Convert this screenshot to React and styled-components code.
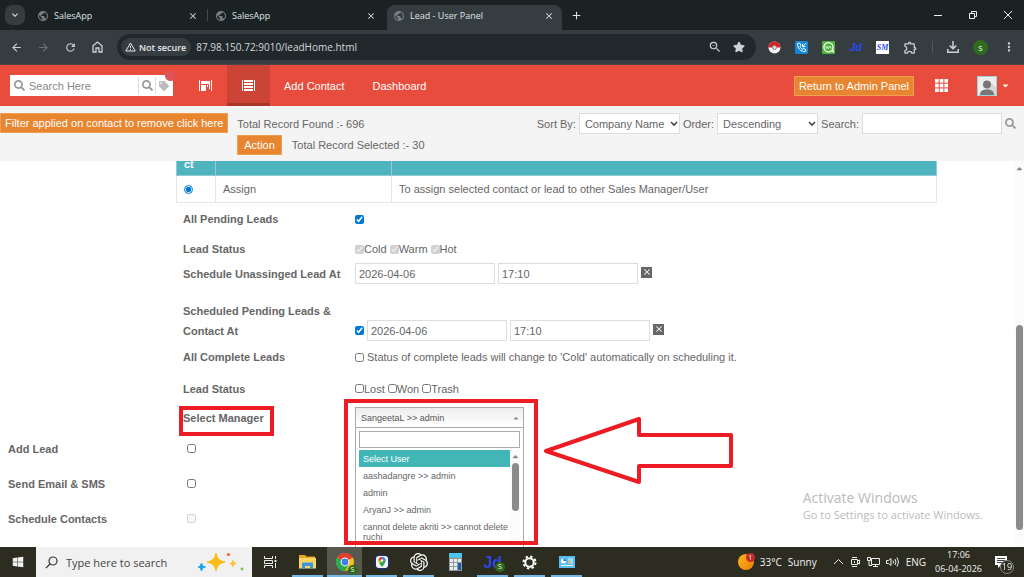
import React, { useState } from "react";
import styled, { createGlobalStyle, css } from "styled-components";
import { FaSearch, FaTag, FaStar, FaCaretDown, FaCaretUp, FaWindows } from "react-icons/fa";
import {
  MdPublic,
  MdClose,
  MdAdd,
  MdArrowBack,
  MdArrowForward,
  MdRefresh,
  MdKeyboardArrowDown,
  MdMoreVert,
  MdOutlineExtension,
  MdZoomOut,
} from "react-icons/md";
import { SiOpenai } from "react-icons/si";

const GlobalStyle = createGlobalStyle`
  * {
    box-sizing: border-box;
  }

  body {
    margin: 0;
    background: #fff;
    color: #666;
    font-family: "Liberation Sans", Arial, sans-serif;
    font-size: 11px;
    overflow: hidden;
  }

  button, input, select {
    font: inherit;
    color: inherit;
    margin: 0;
  }

  button {
    border: 0;
    padding: 0;
    background: none;
  }

  svg {
    display: block;
    flex: none;
  }
`;

const Screen = styled.div`
  display: flex;
  flex-direction: column;
  height: 100vh;
`;

/* ---------- browser ---------- */

const TabStrip = styled.div`
  display: flex;
  align-items: flex-end;
  gap: 3px;
  height: 30px;
  padding-left: 5px;
  background: #1a2224;
  color: #dfe3e4;
  font-family: "Open Sans", "Noto Sans", sans-serif;
  font-size: 9px;
`;

const TabMenu = styled.button`
  display: grid;
  place-items: center;
  width: 20px;
  height: 20px;
  margin: 0 3px 5px 0;
  border-radius: 7px;
  background: #353d41;
`;

const Tab = styled.div`
  position: relative;
  display: flex;
  align-items: center;
  gap: 5px;
  flex: 0 1 175px;
  height: 25px;
  padding: 0 8px 4px 6px;
  border-radius: 8px 8px 0 0;
  background: ${(props) => (props.$active ? "#353d41" : "transparent")};

  > svg {
    color: #777e81;
  }

  span {
    flex: 1;
  }

  ${(props) =>
    props.$divider &&
    css`
      &::after {
        content: "";
        position: absolute;
        right: -2px;
        top: 4px;
        height: 12px;
        border-right: 1px solid #414a4d;
      }
    `}
`;

const NewTab = styled.button`
  margin: 0 0 8px 5px;
`;

const WindowButtons = styled.div`
  display: flex;
  align-items: center;
  gap: 25px;
  height: 30px;
  margin-left: auto;
  padding-right: 11px;
`;

const AddressBar = styled.div`
  display: flex;
  align-items: center;
  gap: 12px;
  height: 35px;
  padding: 0 8px 0 9px;
  background: #353d41;
  color: #ccd2d4;
  border-bottom: 1px solid #4a4846;
  font-family: "Open Sans", "Noto Sans", sans-serif;
`;

const NavButton = styled.button`
  display: grid;
  place-items: center;
  width: 15px;
  height: 20px;
  color: ${(props) => (props.$dim ? "#6b7376" : "#ccd2d4")};
`;

const UrlBox = styled.div`
  display: flex;
  align-items: center;
  gap: 5px;
  flex: 1;
  height: 26px;
  padding: 0 11px 0 4px;
  border-radius: 13px;
  background: #20282b;
`;

const NotSecure = styled.span`
  display: flex;
  align-items: center;
  gap: 3px;
  height: 18px;
  padding: 0 5px 0 4px;
  border-radius: 9px;
  background: #353d41;
  color: #e4e8e9;
  font-size: 9px;
  font-weight: 600;
`;

const Url = styled.span`
  flex: 1;
  font-size: 10px;
  color: #d3d8da;
`;

const UrlIcons = styled.div`
  display: flex;
  align-items: center;
  gap: 11px;
`;

const Extensions = styled.div`
  display: flex;
  align-items: center;
  gap: 14px;
`;

const Separator = styled.span`
  width: 1px;
  height: 12px;
  background: #50585b;
`;

const Profile = styled.button`
  width: 15px;
  height: 15px;
  border-radius: 50%;
  background: #2f6a1d;
  color: #fff;
  font-size: 8px;
`;

/* ---------- application header ---------- */

const Header = styled.header`
  display: flex;
  align-items: center;
  height: 41px;
  padding: 0 14px 0 10px;
  background: #e84c3d;
  color: #fff;
`;

const SearchGroup = styled.form`
  position: relative;
  display: flex;
  align-items: center;
  width: 163px;
  height: 21px;
  padding: 0 1px 0 4px;
  background: #fff;
  color: #999;

  input {
    flex: 1;
    min-width: 0;
    padding: 0 4px;
    border: 0;
    outline: 0;
  }

  input::placeholder {
    color: #888;
  }

  button {
    display: grid;
    place-items: center;
    width: 17px;
    height: 17px;
    border-left: 1px solid #ddd;
    color: #999;
  }
`;

const Dot = styled.span`
  position: absolute;
  top: -5px;
  right: -3px;
  width: 11px;
  height: 11px;
  border-radius: 50%;
  background: #df5457;
`;

const ViewTab = styled.button`
  display: grid;
  place-items: center;
  width: 43px;
  height: 41px;
  margin-left: ${(props) => (props.$active ? "0" : "11px")};
  border-bottom: 3px solid ${(props) => (props.$active ? "#aa372c" : "transparent")};
  background: ${(props) => (props.$active ? "#cc4436" : "transparent")};
  padding-top: 3px;
  color: #fff;
`;

const HeaderLink = styled.a`
  padding: 0 14px;
  color: #fff;
  text-decoration: none;
`;

const OrangeButton = styled.button`
  height: 20px;
  padding: 0 ${(props) => (props.$tight ? "4px" : "6px")};
  border: 1px solid #f0a050;
  background: #e78531;
  color: #fff;
  white-space: nowrap;
`;

const HeaderRight = styled.div`
  display: flex;
  align-items: center;
  margin-left: auto;
  gap: 21px;
`;

const UserMenu = styled.button`
  display: flex;
  align-items: center;
  gap: 4px;
  margin-left: 8px;
  color: #fff;
`;

/* ---------- filter bar ---------- */

const FilterBar = styled.div`
  display: flex;
  align-items: flex-start;
  height: 55px;
  padding: 7px 8px 0 0;
  background: #f4f4f4;
`;

const Totals = styled.div`
  display: flex;
  flex-direction: column;
  margin-left: 9px;
`;

const TotalLine = styled.div`
  display: flex;
  align-items: center;
  gap: 10px;
  height: 21px;
`;

const SortGroup = styled.div`
  display: flex;
  align-items: center;
  gap: 3px;
  margin-left: auto;
`;

const SelectWrap = styled.span`
  position: relative;
  display: flex;

  select {
    appearance: none;
    width: 101px;
    height: 21px;
    padding: 0 5px;
    border: 1px solid #ddd;
    border-radius: 0;
    background: #fff;
  }

  svg {
    position: absolute;
    top: 8px;
    right: 2px;
    pointer-events: none;
  }
`;

const TextBox = styled.input`
  width: 140px;
  height: 21px;
  padding: 0 3px;
  border: 1px solid #ddd;
  background: #fff;
  outline: 0;
`;

/* ---------- page body ---------- */

const Body = styled.div`
  display: flex;
  flex: 1;
  min-height: 0;
  overflow: hidden;
`;

const Main = styled.main`
  flex: 1;
  min-width: 0;
`;

const Rail = styled.div`
  display: flex;
  flex-direction: column;
  align-items: center;
  width: 10px;
  background: #fbfbfb;
  color: #888;
`;

const RailThumb = styled.div`
  width: 7px;
  height: ${(props) => props.$length}px;
  margin-top: ${(props) => props.$offset}px;
  border-radius: 4px;
  background: #8b8b8b;
`;

const ActionTable = styled.table`
  width: 75%;
  margin: -28px 0 0 176px;
  border-collapse: collapse;
  text-align: left;

  th {
    height: 42px;
    padding: 0 7px;
    border: 1px solid #8ecfd6;
    background: #4fb4be;
    color: #fff;
    line-height: 16px;
  }

  th:first-child {
    padding: 2px 7px 0;
  }

  td {
    height: 27px;
    padding: 0 7px;
    border: 1px solid #e8e8e8;
  }

  input {
    display: block;
    width: 9px;
    height: 9px;
    accent-color: #0078d7;
  }
`;

const Form = styled.div`
  padding-left: 183px;
`;

const Row = styled.div`
  position: relative;
  display: grid;
  grid-template-columns: 172px 1fr;
  align-items: ${(props) => props.$align || "center"};
  min-height: ${(props) => props.$height}px;
  margin-bottom: ${(props) => props.$gap || 0}px;
`;

const Label = styled.label`
  max-width: 158px;
  font-weight: bold;
  line-height: 20px;
`;

const Field = styled.div`
  display: flex;
  align-items: center;
  gap: 3px;
`;

const Check = styled.input.attrs({ type: "checkbox" })`
  width: 9px;
  height: 9px;
  accent-color: #0078d7;
`;

const CheckLabel = styled.label`
  display: flex;
  align-items: center;
`;

const ClearButton = styled.button`
  display: grid;
  place-items: center;
  width: 11px;
  height: 11px;
  margin-bottom: 3px;
  background: #666;
  color: #fff;
`;

const SideRow = styled.div`
  display: grid;
  grid-template-columns: 179px 1fr;
  align-items: center;
  height: 35px;
  padding-left: 8px;
`;

/* ---------- manager picker ---------- */

const Picker = styled.div`
  position: relative;
  width: 169px;
  color: #555;
  font-size: 9px;
`;

const PickerButton = styled.button`
  display: flex;
  align-items: center;
  justify-content: space-between;
  width: 100%;
  height: 21px;
  padding: 0 3px 0 5px;
  border: 1px solid #aaa;
  background: linear-gradient(#eee, #fff);
`;

const Drop = styled.div`
  position: absolute;
  z-index: 1;
  top: 21px;
  left: 0;
  right: 0;
  height: 125px;
  padding: 3px;
  border: 1px solid #aaa;
  border-top: 0;
  background: #fff;

  input {
    display: block;
    width: 100%;
    height: 17px;
    padding: 0 3px;
    border: 1px solid #aaa;
    outline: 0;
  }
`;

const DropBody = styled.div`
  display: flex;
  height: 105px;
  margin-top: 2px;
  overflow: hidden;
`;

const Options = styled.ul`
  flex: 1;
  margin: 0;
  padding: 0;
  list-style: none;
`;

const Option = styled.li`
  padding: 4px 0 3px 4px;
  line-height: 10px;
  background: ${(props) => (props.$active ? "#42b6b6" : "transparent")};
  color: ${(props) => (props.$active ? "#fff" : "#666")};
`;

/* ---------- red markers and watermark ---------- */

const Marker = styled.div`
  position: absolute;
  z-index: 2;
  border: 4px solid #ed1c24;
  pointer-events: none;
`;

const ManagerMarker = styled(Marker)`
  top: 2px;
  left: -4px;
  width: 95px;
  height: 30px;
`;

const PickerMarker = styled(Marker)`
  top: -8px;
  left: -11px;
  width: 194px;
  height: 146px;
`;

const Arrow = styled.svg`
  position: absolute;
  z-index: 2;
  top: 10px;
  left: 187px;
`;

const Watermark = styled.div`
  position: absolute;
  right: 41px;
  bottom: 54px;
  color: #bbb;
  font-family: "Open Sans", "Noto Sans", sans-serif;
  font-size: 11px;
  line-height: 16px;

  strong {
    display: block;
    font-size: 14px;
    font-weight: 400;
    line-height: 18px;
  }
`;

/* ---------- taskbar ---------- */

const Taskbar = styled.footer`
  display: flex;
  position: relative;
  z-index: 3;
  height: 30px;
  background: #2c2c21;
  color: #f2f2f2;
  font-family: "Open Sans", "Noto Sans", sans-serif;
  font-size: 10px;
`;

const TaskButton = styled.button`
  display: grid;
  place-items: center;
  width: ${(props) => props.$width || 37}px;
  height: 30px;
  background: ${(props) => (props.$active ? "#57584f" : "transparent")};
  box-shadow: ${(props) => (props.$open ? "inset 0 -2px #76b9e6" : "none")};
  background-clip: padding-box;
  border: 0 solid transparent;
  border-width: ${(props) => (props.$active ? "0 1px" : "0 3px")};
`;

const TaskSearch = styled.label`
  display: flex;
  align-items: center;
  gap: 8px;
  width: 216px;
  padding: 0 8px 0 9px;
  background: #f1f1f1;
  color: #444;

  input {
    flex: 1;
    min-width: 0;
    padding: 0;
    border: 0;
    background: none;
    font-size: 11px;
    outline: 0;
  }

  input::placeholder {
    color: #444;
  }
`;

const Tray = styled.div`
  display: flex;
  align-items: center;
  gap: 6px;
  margin-left: auto;
  padding-right: 10px;
`;

const Clock = styled.div`
  padding-left: 3px;
  font-size: 9px;
  line-height: 14px;
  text-align: center;
`;

const Weather = styled.div`
  display: flex;
  align-items: center;
  gap: 6px;
  margin-right: 10px;
`;

/* ---------- icons ---------- */

const HomeIcon = () => (
  <svg width="11" height="12" viewBox="0 0 11 12" fill="none" stroke="currentColor" strokeWidth="1.3">
    <path d="M1 4.8 5.5 1 10 4.8V11H7V7H4v4H1z" />
  </svg>
);

const WarningIcon = () => (
  <svg width="11" height="10" viewBox="0 0 11 10" fill="none" stroke="currentColor">
    <path d="M5.5 1 10.2 9H.8z" />
    <path d="M5.5 3.8v2.4M5.5 7v1" />
  </svg>
);

const BallIcon = () => (
  <svg width="13" height="13" viewBox="0 0 13 13">
    <circle cx="6.5" cy="6.5" r="6" fill="#f4f4f4" />
    <path d="M.5 6.5a6 6 0 0 1 12 0z" fill="#dc1f26" />
    <circle cx="6.5" cy="6.5" r="2" fill="#ddd" stroke="#888" />
  </svg>
);

const PhoneIcon = () => (
  <svg width="13" height="13" viewBox="0 0 13 13">
    <rect width="13" height="13" rx="1" fill="#1686d9" />
    <path
      d="M2.6 2.4c-.6 4.500 3.200 8.400 7.600 8.200l.8-1.900-2-1.300-1.200.9C6.400 7.700 5.400 6.600 5 5.200l.9-1L4.600 2z"
      fill="none"
      stroke="#fff"
    />
    <path d="M11.200 2 8 5.200M7.500 2.800v2.900h2.900" stroke="#fff" fill="none" />
  </svg>
);

const ChatIcon = () => (
  <svg width="13" height="13" viewBox="0 0 13 13">
    <rect width="13" height="13" rx="1" fill="#4db33d" />
    <circle cx="6.5" cy="6.3" r="4.600" fill="none" stroke="#fff" strokeWidth="1.300" />
    <path d="M9 9.500h3V12z" fill="#fff" />
    <path d="m3.800 5 .9 2.600.9-2.200.8 2.200L8 5l1.200 2.600" fill="none" stroke="#fff" strokeWidth=".7" />
  </svg>
);

const LogoText = styled.span`
  width: ${(props) => (props.$boxed ? "13px" : "auto")};
  background: ${(props) => (props.$boxed ? "#fff" : "transparent")};
  color: #2c46f2;
  font-family: ${(props) => (props.$boxed ? '"Liberation Serif", serif' : '"Liberation Sans", sans-serif')};
  font-size: ${(props) => props.$size}px;
  font-style: ${(props) => (props.$upright ? "normal" : "italic")};
  font-weight: bold;
  line-height: 13px;
  text-align: center;
`;

const DownloadIcon = () => (
  <svg width="12" height="12" viewBox="0 0 12 12" fill="none" stroke="currentColor" strokeWidth="1.500">
    <path d="M6 0v7.500M2.800 4.600 6 7.800l3.200-3.200M.8 8v3.200h10.400V8" />
  </svg>
);

const GridIcon = () => (
  <svg width="13" height="13" viewBox="0 0 13 13" fill="#fff">
    {[0, 4.7, 9.4].map((y) =>
      [0, 4.7, 9.4].map((x) => <rect key={`${x}-${y}`} x={x} y={y} width="3.7" height="3.7" />)
    )}
  </svg>
);

const AvatarIcon = () => (
  <svg width="20" height="20" viewBox="0 0 20 20">
    <rect x=".5" y=".5" width="19" height="19" fill="#eee" stroke="#9fd3dc" />
    <path d="m12 5 7 6v8H8z" fill="#d8d8d8" />
    <circle cx="10" cy="8.5" r="4" fill="#777" />
    <path d="M3 19c0-4 2.500-5.500 7-5.500s7 1.500 7 5.500z" fill="#777" />
  </svg>
);

const BoardIcon = () => (
  <svg width="13" height="13" viewBox="0 0 13 13" fill="#fff">
    <path d="M0 1h1v11H0zM12 1h1v11h-1zM2 2h9v3H2zM2 6h5v6H2zM8 6h1v2H8zM10 5h1v5h-1z" />
  </svg>
);

const ListIcon = () => (
  <svg width="13" height="13" viewBox="0 0 13 13" fill="#fff">
    <path d="M0 1h1v11H0zM12 1h1v11h-1zM2 1h9v2H2zM2 4h9v2H2zM2 7h9v2H2zM2 10h9v2H2z" />
  </svg>
);

const SparkleIcon = () => (
  <svg width="46" height="20" viewBox="0 0 46 20">
    <path d="M18 1c1.500 6 3 7.500 9 9-6 1.500-7.500 3-9 9-1.500-6-3-7.500-9-9 6-1.500 7.500-3 9-9z" fill="#fbbc17" stroke="#fbbc17" />
    <path d="M35 7c.8 3 1.400 3.700 4.500 4.500-3 .8-3.700 1.400-4.500 4.500-.8-3-1.500-3.700-4.500-4.500 3-.8 3.700-1.500 4.500-4.500z" fill="#fbc33a" />
    <path d="M3.500 11l1.200 3 2.800 1-2.800 1-1.200 3-1.200-3-2.300-1 2.300-1z" fill="#1fa5ea" stroke="#1fa5ea" />
    <circle cx="30.500" cy="2.500" r="1.600" fill="#f0613a" />
    <circle cx="44" cy="17" r="1.400" fill="#7ac143" />
  </svg>
);

const TaskViewIcon = () => (
  <svg width="13" height="12" viewBox="0 0 13 12" fill="none" stroke="#eee">
    <path d="M.5 0v2.500h8V0M.5 12V9.500h8V12M.5 4.500h8v3h-8zM11.500 0v3M11.500 7v5" />
    <path d="M10.500 4h2v2h-2z" fill="#eee" stroke="none" />
  </svg>
);

const FolderIcon = () => (
  <svg width="17" height="14" viewBox="0 0 17 14">
    <path d="M0 0h6l1.500 1.500H16V13H0z" fill="#e9a820" />
    <path d="M0 3h17v10.500H0z" fill="#fcd462" />
    <path d="M3 7.500h11V14h-3v-3H6v3H3z" fill="#3a94de" />
  </svg>
);

const ChromeIcon = () => (
  <svg width="20" height="20" viewBox="0 0 20 20">
    <circle cx="10" cy="10" r="9" fill="#fbc116" />
    <path d="M10 10 2.200 5.500a9 9 0 0 1 15.600 0z" fill="#e33b2e" />
    <path d="M10 10 2.200 5.500A9 9 0 0 0 10 19l4-7z" fill="#2da94f" />
    <circle cx="10" cy="10" r="4.400" fill="#fff" />
    <circle cx="10" cy="10" r="3.400" fill="#3f7ee8" />
  </svg>
);

const MapsIcon = () => (
  <svg width="16" height="16" viewBox="0 0 16 16">
    <circle cx="8" cy="8" r="8" fill="#262f6e" />
    <rect x="2" y="2" width="12" height="12" rx="3" fill="#f3f5f8" />
    <path d="M8 13C5 9.500 4.500 8 4.500 6.500a3.500 3.500 0 0 1 7 0C11.500 8 11 9.500 8 13z" fill="#35a853" />
    <path d="M4.500 6.500A3.500 3.500 0 0 1 8 3v3.500z" fill="#ea4335" />
    <path d="M8 3a3.500 3.500 0 0 1 3.500 3.500H8z" fill="#4285f4" />
    <path d="M4.500 6.500H8L5.500 9.500z" fill="#fbbc04" />
    <circle cx="8" cy="6.500" r="1.200" fill="#fff" />
  </svg>
);

const CalculatorIcon = () => (
  <svg width="13" height="18" viewBox="0 0 13 18">
    <rect width="13" height="18" fill="#8f9aa0" />
    <rect width="13" height="4.500" fill="#4ac6f2" />
    <g fill="#e8eef1">
      {[6, 10, 14].map((y) =>
        [1, 5, 9].map((x) => <rect key={`${x}-${y}`} x={x} y={y} width="3" height="3" />)
      )}
    </g>
    <rect x="9" y="10" width="3" height="7" fill="#1b5fae" />
  </svg>
);

const GearIcon = () => (
  <svg width="15" height="15" viewBox="0 0 15 15" fill="none" stroke="#fff">
    <circle cx="7.5" cy="7.5" r="4.200" strokeWidth="2" />
    <circle cx="7.5" cy="7.5" r="6" strokeWidth="2" strokeDasharray="2.350 2.362" />
  </svg>
);

const CardIcon = () => (
  <svg width="16" height="12" viewBox="0 0 16 12">
    <rect width="16" height="12" fill="#55bdf0" />
    <circle cx="4.500" cy="5" r="2.500" fill="#fff" />
    <path d="M4.500 5V2.500A2.500 2.500 0 0 1 7 5z" fill="#1c6fb4" />
    <path d="M9 3h5M9 5h5M9 7h5M2 9.500h12" stroke="#e9f7ff" />
    <path d="M9 5h2M9 7h3" stroke="#e8a531" />
  </svg>
);

const ThinSearchIcon = () => (
  <svg width="13" height="13" viewBox="0 0 13 13" fill="none" stroke="#333" strokeWidth="1.200">
    <circle cx="8" cy="5" r="4" />
    <path d="M5 8 .8 12.200" />
  </svg>
);

const ChevronIcon = () => (
  <svg width="8" height="6" viewBox="0 0 8 6" fill="none" stroke="#444" strokeWidth="1.600">
    <path d="m1 1 3 3 3-3" />
  </svg>
);

const BadgeWrap = styled.span`
  position: relative;
  display: grid;
  place-items: center;
  margin: ${(props) => (props.$spaced ? "0 7px" : "0")};
`;

const SmallBadge = styled.span`
  position: absolute;
  right: -3px;
  bottom: -3px;
  width: 10px;
  height: 10px;
  border-radius: 50%;
  background: #2f6a1d;
  color: #fff;
  font-size: 7px;
  line-height: 10px;
  text-align: center;
`;

const SunIcon = styled.span`
  position: relative;
  width: 16px;
  height: 16px;
  border-radius: 50%;
  background: linear-gradient(120deg, #fdb714, #ec7a12);
`;

const SunBadge = styled.span`
  position: absolute;
  top: -1px;
  right: -1px;
  width: 9px;
  height: 9px;
  border-radius: 50%;
  background: #c42b2b;
  font-size: 7px;
  line-height: 9px;
  text-align: center;
`;

const NoticeBadge = styled.span`
  position: absolute;
  right: -7px;
  bottom: -6px;
  width: 14px;
  height: 14px;
  border: 1px solid #888;
  border-radius: 50%;
  background: #2c2c21;
  font-size: 9px;
  line-height: 12px;
  text-align: center;
`;

const tabs = [
  { title: "SalesApp", divider: true },
  { title: "SalesApp" },
  { title: "Lead - User Panel", active: true },
];

const users = [
  "Select User",
  "aashadangre >> admin",
  "admin",
  "AryanJ >> admin",
  "cannot delete akriti >> cannot delete ruchi",
];

const sideRows = [
  { id: "addLead", label: "Add Lead" },
  { id: "sendEmail", label: "Send Email & SMS" },
  { id: "scheduleContacts", label: "Schedule Contacts", disabled: true },
];

const Browser = () => (
  <>
    <TabStrip>
      <TabMenu aria-label="Search tabs">
        <MdKeyboardArrowDown size={12} />
      </TabMenu>
      {tabs.map((tab, index) => (
        <Tab key={index} $active={tab.active} $divider={tab.divider}>
          <MdPublic size={12} />
          <span>{tab.title}</span>
          <button aria-label="Close tab">
            <MdClose size={10} />
          </button>
        </Tab>
      ))}
      <NewTab aria-label="New tab">
        <MdAdd size={13} />
      </NewTab>
      <WindowButtons>
        <button aria-label="Minimize">
          <svg width="10" height="10" stroke="#eee">
            <path d="M1 5.500h8" />
          </svg>
        </button>
        <button aria-label="Restore">
          <svg width="10" height="10" fill="none" stroke="#eee">
            <path d="M1.500 3.500h5v5h-5zM3.500 3V1.500h5v5H7" />
          </svg>
        </button>
        <button aria-label="Close">
          <svg width="10" height="10" stroke="#eee">
            <path d="m1 1 8 8M9 1 1 9" />
          </svg>
        </button>
      </WindowButtons>
    </TabStrip>

    <AddressBar>
      <NavButton aria-label="Back"><MdArrowBack size={13} /></NavButton>
      <NavButton aria-label="Forward" $dim><MdArrowForward size={13} /></NavButton>
      <NavButton aria-label="Reload"><MdRefresh size={13} /></NavButton>
      <NavButton aria-label="Home"><HomeIcon /></NavButton>
      <UrlBox>
        <NotSecure>
          <WarningIcon />
          Not secure
        </NotSecure>
        <Url>87.98.150.72:9010/leadHome.html</Url>
        <UrlIcons>
          <MdZoomOut size={14} />
          <FaStar size={12} />
        </UrlIcons>
      </UrlBox>
      <Extensions>
        <BallIcon />
        <PhoneIcon />
        <ChatIcon />
        <LogoText $size={11}>Jd</LogoText>
        <LogoText $size={8} $boxed>SM</LogoText>
        <MdOutlineExtension size={15} />
        <Separator />
        <DownloadIcon />
        <Profile>S</Profile>
        <MdMoreVert size={14} />
      </Extensions>
    </AddressBar>
  </>
);

const AppHeader = () => (
  <Header>
    <SearchGroup>
      <FaSearch size={11} />
      <input type="text" placeholder="Search Here" aria-label="Search Here" />
      <button type="button" aria-label="Search"><FaSearch size={11} /></button>
      <button type="button" aria-label="Tags"><FaTag size={10} color="#bbb" /></button>
      <Dot />
    </SearchGroup>
    <ViewTab aria-label="Board view"><BoardIcon /></ViewTab>
    <ViewTab aria-label="List view" $active><ListIcon /></ViewTab>
    <HeaderLink href="#add">Add Contact</HeaderLink>
    <HeaderLink href="#dashboard">Dashboard</HeaderLink>
    <HeaderRight>
      <OrangeButton $tight>Return to Admin Panel</OrangeButton>
      <button aria-label="Apps"><GridIcon /></button>
      <UserMenu aria-label="User menu">
        <AvatarIcon />
        <FaCaretDown size={9} />
      </UserMenu>
    </HeaderRight>
  </Header>
);

const SelectBox = ({ id, value }) => (
  <SelectWrap>
    <select id={id}>
      <option>{value}</option>
    </select>
    <ChevronIcon />
  </SelectWrap>
);

const Filters = () => (
  <FilterBar>
    <OrangeButton $tight>Filter applied on contact to remove click here</OrangeButton>
    <Totals>
      <TotalLine>Total Record Found :- 696</TotalLine>
      <TotalLine>
        <OrangeButton>Action</OrangeButton>
        Total Record Selected :- 30
      </TotalLine>
    </Totals>
    <SortGroup>
      <label htmlFor="sortBy">Sort By:</label>
      <SelectBox id="sortBy" value="Company Name" />
      <label htmlFor="order">Order:</label>
      <SelectBox id="order" value="Descending" />
      <label htmlFor="search">Search:</label>
      <TextBox id="search" />
      <FaSearch size={11} color="#999" />
    </SortGroup>
  </FilterBar>
);

const DateFields = ({ name, children }) => (
  <Field>
    {children}
    <TextBox aria-label={`${name} date`} defaultValue="2026-04-06" />
    <TextBox aria-label={`${name} time`} defaultValue="17:10" />
    <ClearButton aria-label={`Clear ${name}`}>
      <MdClose size={10} />
    </ClearButton>
  </Field>
);

const StatusChecks = ({ names, ...rest }) => (
  <Field>
    {names.map((name) => (
      <CheckLabel key={name}>
        <Check {...rest} />
        {name}
      </CheckLabel>
    ))}
  </Field>
);

const ManagerPicker = () => {
  const [term, setTerm] = useState("");
  const shown = users.filter((user) => user.toLowerCase().includes(term.toLowerCase()));

  return (
    <Picker>
      <PickerButton id="manager" aria-haspopup="listbox" aria-expanded="true">
        SangeetaL &gt;&gt; admin
        <FaCaretUp size={8} color="#888" />
      </PickerButton>
      <Drop>
        <input
          autoFocus
          aria-label="Filter users"
          value={term}
          onChange={(e) => setTerm(e.target.value)}
        />
        <DropBody>
          <Options role="listbox">
            {shown.map((user, index) => (
              <Option key={user} role="option" aria-selected={index === 0} $active={index === 0}>
                {user}
              </Option>
            ))}
          </Options>
          <Rail>
            <FaCaretUp size={9} style={{ marginTop: 2 }} />
            <RailThumb $length={48} $offset={2} />
          </Rail>
        </DropBody>
      </Drop>
      <PickerMarker />
      <Arrow
        width="192"
        height="68"
        viewBox="0 0 192 68"
        fill="none"
        stroke="#ed1c24"
        strokeWidth="4"
        strokeLinejoin="round"
      >
        <path d="M4 34 97 2v16h92v31H97v16z" />
      </Arrow>
    </Picker>
  );
};

const WindowsTaskbar = () => (
  <Taskbar>
    <TaskButton $width={36} aria-label="Start"><FaWindows size={12} /></TaskButton>
    <TaskSearch>
      <ThinSearchIcon />
      <input type="text" placeholder="Type here to search" />
      <SparkleIcon />
    </TaskSearch>
    <TaskButton aria-label="Task view"><TaskViewIcon /></TaskButton>
    <TaskButton aria-label="File Explorer" $open><FolderIcon /></TaskButton>
    <TaskButton aria-label="Chrome" $open $active>
      <BadgeWrap>
        <ChromeIcon />
        <SmallBadge>S</SmallBadge>
      </BadgeWrap>
    </TaskButton>
    <TaskButton aria-label="Maps" $open><MapsIcon /></TaskButton>
    <TaskButton aria-label="ChatGPT" $open><SiOpenai size={18} color="#fff" /></TaskButton>
    <TaskButton aria-label="Calculator"><CalculatorIcon /></TaskButton>
    <TaskButton aria-label="Jd" $open>
      <BadgeWrap>
        <LogoText $size={16} $upright>Jd</LogoText>
        <SmallBadge>S</SmallBadge>
      </BadgeWrap>
    </TaskButton>
    <TaskButton aria-label="Settings" $open><GearIcon /></TaskButton>
    <TaskButton aria-label="Control panel" $open><CardIcon /></TaskButton>
    <Tray>
      <Weather>
        <SunIcon><SunBadge>1</SunBadge></SunIcon>
        <span>33°C</span>
        <span>Sunny</span>
      </Weather>
      <svg width="11" height="12" fill="none" stroke="#eee"><path d="m1 8 4.500-4.500L10 8" /></svg>
      <svg width="11" height="12" fill="none" stroke="#eee">
        <path d="M1.500 3.500h6v5h-6zM7.500 5l2-1v4l-2-1M2 1.500h5M2 10.500h5M4.500 5v2" />
      </svg>
      <svg width="13" height="12" fill="none" stroke="#eee">
        <path d="M4.500 2.500h8v6h-8zM8.500 8.500v2M6 10.500h5M.5 1.500h3v3h-3zM2 4.500v5h3" />
      </svg>
      <svg width="14" height="12" fill="none" stroke="#eee">
        <path d="M.5 4.500h2l2.500-2v7l-2.500-2h-2zM7 4.500q1 1.500 0 3M9 3q2 3 0 6M11 1.500q3 4.500 0 9" />
      </svg>
      <span>ENG</span>
      <Clock>
        17:06
        <br />
        06-04-2026
      </Clock>
      <BadgeWrap $spaced>
        <svg width="12" height="12" fill="#fff">
          <path d="M0 0h12v9H6l-3 3V9H0z" />
          <path d="M2 2.500h8M2 4.500h8M2 6.500h8" stroke="#444" />
        </svg>
        <NoticeBadge>19</NoticeBadge>
      </BadgeWrap>
    </Tray>
  </Taskbar>
);

const App = () => {
  return (
    <Screen>
      <GlobalStyle />
      <Browser />
      <AppHeader />
      <Filters />
      <Body>
        <Main>
          <ActionTable>
            <colgroup>
              <col style={{ width: 39 }} />
              <col style={{ width: 176 }} />
              <col />
            </colgroup>
            <thead>
              <tr>
                <th>Sele<br />ct</th>
                <th>Assign Manage Option</th>
                <th />
              </tr>
            </thead>
            <tbody>
              <tr>
                <td>
                  <input type="radio" name="action" aria-label="Assign" defaultChecked />
                </td>
                <td>Assign</td>
                <td>To assign selected contact or lead to other Sales Manager/User</td>
              </tr>
            </tbody>
          </ActionTable>

          <Form>
            <Row $height={32}>
              <Label htmlFor="allPending">All Pending Leads</Label>
              <Field><Check id="allPending" defaultChecked /></Field>
            </Row>
            <Row $height={28}>
              <Label as="span">Lead Status</Label>
              <StatusChecks names={["Cold", "Warm", "Hot"]} defaultChecked disabled />
            </Row>
            <Row $height={21} $gap={17}>
              <Label as="span">Schedule Unassinged Lead At</Label>
              <DateFields name="Unassigned lead" />
            </Row>
            <Row $height={40} $align="end">
              <Label htmlFor="scheduledPending">Scheduled Pending Leads &amp; Contact At</Label>
              <DateFields name="Pending lead">
                <Check id="scheduledPending" defaultChecked />
              </DateFields>
            </Row>
            <Row $height={32}>
              <Label htmlFor="allComplete">All Complete Leads</Label>
              <Field>
                <Check id="allComplete" />
                Status of complete leads will change to 'Cold' automatically on scheduling it.
              </Field>
            </Row>
            <Row $height={31}>
              <Label as="span">Lead Status</Label>
              <StatusChecks names={["Lost", "Won", "Trash"]} />
            </Row>
            <Row $height={27}>
              <Label htmlFor="manager">Select Manager</Label>
              <ManagerPicker />
              <ManagerMarker />
            </Row>
          </Form>

          {sideRows.map((row) => (
            <SideRow key={row.id}>
              <Label htmlFor={row.id}>{row.label}</Label>
              <Check id={row.id} disabled={row.disabled} />
            </SideRow>
          ))}
        </Main>
        <Rail>
          <FaCaretUp size={9} style={{ marginTop: 3 }} />
          <RailThumb $length={205} $offset={152} />
        </Rail>
      </Body>
      <WindowsTaskbar />
      <Watermark>
        <strong>Activate Windows</strong>
        Go to Settings to activate Windows.
      </Watermark>
    </Screen>
  );
};

export default App;
